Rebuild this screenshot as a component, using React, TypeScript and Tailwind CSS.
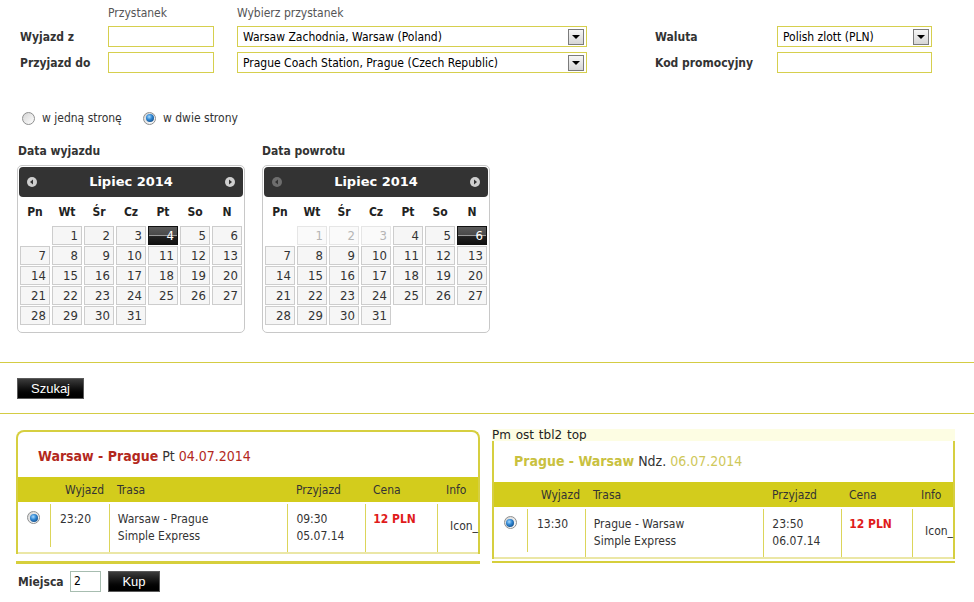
import React from "react";

// Shared font stack — Tahoma-like narrow humanist sans.
const FONT = "[font-family:'DejaVu_Sans_Condensed','DejaVu_Sans',sans-serif]";

// ============================================================
// Small form pieces
// ============================================================
function TextBox({ width, value }: { width: string; value?: string }) {
  return (
    <div className={`${width} h-[21px] border border-[#d6cf4e] bg-white pl-[5px] leading-[19px] text-black`}>
      {value}
    </div>
  );
}

function Select({ width, value }: { width: string; value: string }) {
  return (
    <div className={`${width} h-[21px] border border-[#d6cf4e] bg-white flex items-center pl-[5px] pr-[2px]`}>
      <span className="flex-1 text-black whitespace-nowrap overflow-hidden">{value}</span>
      <span className="w-[16px] h-[16px] border border-[#7b7b7b] bg-gradient-to-b from-[#f6f6f6] to-[#d6d6d6] flex items-center justify-center">
        <span className="block w-0 h-0 border-l-[4px] border-r-[4px] border-t-[4px] border-l-transparent border-r-transparent border-t-black mt-[1px]" />
      </span>
    </div>
  );
}

function Radio({ checked }: { checked?: boolean }) {
  return (
    <span className="w-[13px] h-[13px] rounded-full border border-[#8e8f8f] bg-gradient-to-br from-[#d5d5d5] to-[#ffffff] flex items-center justify-center shrink-0">
      {checked && (
        <span className="block w-[8px] h-[8px] rounded-full bg-[radial-gradient(circle_at_40%_35%,#a9dbff_0%,#2f86d2_40%,#0a3668_100%)]" />
      )}
    </span>
  );
}

function BlackButton({ width, label }: { width: string; label: string }) {
  return (
    <div
      className={`${width} h-[21px] border border-[#5a5a5a] bg-gradient-to-b from-[#3c3c3c] via-[#111] to-[#000] text-white text-[13px] [font-family:'Liberation_Sans',Arial,sans-serif] flex items-center justify-center`}
    >
      {label}
    </div>
  );
}

// ============================================================
// Datepicker (jQuery UI look)
// ============================================================
function NavIcon({ dir, dim }: { dir: "prev" | "next"; dim?: boolean }) {
  return (
    <svg width="10" height="10" viewBox="0 0 10 10">
      <circle cx="5" cy="5" r="5" fill={dim ? "#6e6e6e" : "#cfcfcf"} />
      {dir === "prev" ? (
        <polygon points="6,2.5 6,7.5 3,5" fill="#333" />
      ) : (
        <polygon points="4,2.5 4,7.5 7,5" fill="#333" />
      )}
    </svg>
  );
}

const DAY_NAMES = ["Pn", "Wt", "Śr", "Cz", "Pt", "So", "N"];

function Calendar({ selected, minDay }: { selected: number; minDay: number }) {
  // July 2014 starts on Tuesday, week starts Monday
  const cells: (number | null)[] = [null, ...Array.from({ length: 31 }, (_, i) => i + 1)];

  return (
    <div className="w-[228px] h-[168px] border border-[#c8c8c8] rounded-[5px] p-[1px] bg-white">
      <div className="h-[30px] rounded-[4px] bg-[#333] flex items-center justify-between px-[8px]">
        <NavIcon dir="prev" dim={minDay > 1} />
        <span className="text-white font-bold text-[13px] [font-family:'DejaVu_Sans',sans-serif]">Lipiec 2014</span>
        <NavIcon dir="next" />
      </div>

      <div className="grid grid-cols-7 gap-x-[2px] px-[1px] h-[29px] items-center text-center font-bold text-[12px] text-[#222]">
        {DAY_NAMES.map((d) => (
          <span key={d}>{d}</span>
        ))}
      </div>

      <div className="grid grid-cols-7 gap-x-[2px] gap-y-[1px] px-[1px]">
        {cells.map((day, i) => {
          if (day === null) return <span key={i} />;
          const disabled = day < minDay;
          const isSel = day === selected;
          return (
            <span
              key={i}
              className={`h-[19px] border text-right pr-[3px] text-[13px] leading-[17px] ${
                isSel
                  ? "border-[#111] bg-[linear-gradient(to_bottom,#5c5c5c_0%,#4a4a4a_45%,#9a9a9a_50%,#222_56%,#111_100%)] text-white"
                  : disabled
                  ? "border-[#e6e6e6] bg-[#fafafa] text-[#b5b5b5]"
                  : "border-[#cdcdcd] bg-[#f6f6f6] text-[#333]"
              }`}
            >
              {day}
            </span>
          );
        })}
      </div>
    </div>
  );
}

// ============================================================
// Result tables
// ============================================================
interface Trip {
  dep: string;
  route: string;
  arr: string;
  arrDate: string;
}

function TripTable({ trip, cols }: { trip: Trip; cols: string[] }) {
  return (
    <>
      <div className="h-[25px] bg-[#d3cc1c] flex items-center text-[12px] text-[#333]">
        <span className={cols[0]} />
        <span className={`${cols[1]} text-right pr-[5px]`}>Wyjazd</span>
        <span className={`${cols[2]} pl-[8px]`}>Trasa</span>
        <span className={`${cols[3]} pl-[8px]`}>Przyjazd</span>
        <span className={`${cols[4]} pl-[7px]`}>Cena</span>
        <span className="flex-1 pl-[8px]">Info</span>
      </div>
      <div className="h-[50px] flex text-[12px] text-[#333] leading-[17px] bg-white">
        <div className={`${cols[0]} flex justify-center pt-[9px]`}>
          <Radio checked />
        </div>
        <div className={`${cols[1]} mt-[2px] mb-[5px] border-l border-[#dcd55a] pl-[9px] pt-[7px]`}>{trip.dep}</div>
        <div className={`${cols[2]} mt-[2px] border-l border-[#dcd55a] pl-[8px] pt-[7px]`}>
          <div>{trip.route}</div>
          <div>Simple Express</div>
        </div>
        <div className={`${cols[3]} mt-[2px] border-l border-[#dcd55a] pl-[8px] pt-[7px]`}>
          <div>{trip.arr}</div>
          <div>{trip.arrDate}</div>
        </div>
        <div className={`${cols[4]} mt-[2px] border-l border-[#dcd55a] pl-[7px] pt-[7px] font-bold text-[#e01b1b]`}>12 PLN</div>
        <div className="flex-1 mt-[2px] border-l border-[#dcd55a] pl-[12px] pt-[14px] whitespace-nowrap">Icon_</div>
      </div>
    </>
  );
}

const LEFT_COLS = ["w-[32px]", "w-[59px]", "w-[179px]", "w-[78px]", "w-[72px]"];
const RIGHT_COLS = ["w-[33px]", "w-[58px]", "w-[179px]", "w-[78px]", "w-[71px]"];

// ============================================================
// Page
// ============================================================
export default function App() {
  return (
    <div className={`relative w-[974px] h-[602px] overflow-hidden bg-white text-[12px] text-[#333] ${FONT}`}>
      {/* Search form */}
      <div className="pl-[20px] pt-[4px]">
        <div className="flex h-[16px] text-[#555]">
          <span className="w-[88px]" />
          <span className="w-[129px]">Przystanek</span>
          <span>Wybierz przystanek</span>
        </div>

        <div className="flex items-center h-[21px] mt-[6px]">
          <span className="w-[88px] font-bold">Wyjazd z</span>
          <TextBox width="w-[106px]" />
          <div className="ml-[23px]">
            <Select width="w-[350px]" value="Warsaw Zachodnia, Warsaw (Poland)" />
          </div>
          <span className="ml-[68px] w-[122px] font-bold">Waluta</span>
          <Select width="w-[155px]" value="Polish zlott (PLN)" />
        </div>

        <div className="flex items-center h-[21px] mt-[5px]">
          <span className="w-[88px] font-bold">Przyjazd do</span>
          <TextBox width="w-[106px]" />
          <div className="ml-[23px]">
            <Select width="w-[350px]" value="Prague Coach Station, Prague (Czech Republic)" />
          </div>
          <span className="ml-[68px] w-[122px] font-bold">Kod promocyjny</span>
          <TextBox width="w-[155px]" />
        </div>

        <div className="flex items-center h-[14px] mt-[38px] text-[#333]">
          <span className="ml-[2px]">
            <Radio />
          </span>
          <span className="ml-[7px] w-[101px]">w jedną stronę</span>
          <Radio checked />
          <span className="ml-[7px]">w dwie strony</span>
        </div>
      </div>

      {/* Date pickers */}
      <div className="flex pl-[17px] mt-[19px]">
        <div>
          <div className="h-[14px] leading-[14px] font-bold ml-[1px]">Data wyjazdu</div>
          <div className="mt-[7px]">
            <Calendar selected={4} minDay={1} />
          </div>
        </div>
        <div className="ml-[17px]">
          <div className="h-[14px] leading-[14px] font-bold">Data powrotu</div>
          <div className="mt-[7px]">
            <Calendar selected={6} minDay={4} />
          </div>
        </div>
      </div>

      <div className="h-px bg-[#d4cc44] mt-[29px]" />
      <div className="pl-[17px] mt-[15px]">
        <BlackButton width="w-[67px]" label="Szukaj" />
      </div>
      <div className="h-px bg-[#d4cc44] mt-[14px]" />

      {/* Results */}
      <div className="flex mt-[15px]">
        {/* Outbound */}
        <div className="ml-[16px] w-[464px] mt-[1px]">
          <div className="border-2 border-b-0 border-[#d6cf40] rounded-t-[8px]">
            <div className="h-[45px] pl-[20px] pt-[16px] leading-[17px] text-[14px] whitespace-nowrap">
              <span className="font-bold text-[#b3281d]">Warsaw - Prague</span>
              <span className="text-[#333]"> Pt </span>
              <span className="text-[#b3281d]">04.07.2014</span>
            </div>
            <TripTable
              cols={LEFT_COLS}
              trip={{ dep: "23:20", route: "Warsaw - Prague", arr: "09:30", arrDate: "05.07.14" }}
            />
            <div className="h-[2px] bg-[#ebe7a6]" />
          </div>
          <div className="h-[3px] bg-[#d6cf3c] mt-[7px]" />
          <div className="flex items-center h-[21px] mt-[7px] pl-[2px]">
            <span className="w-[52px] font-bold">Miejsca</span>
            <div className="w-[31px] h-[21px] border border-[#a7bdb0] pl-[3px] leading-[19px] text-black">2</div>
            <div className="ml-[7px]">
              <BlackButton width="w-[52px]" label="Kup" />
            </div>
          </div>
        </div>

        {/* Return */}
        <div className="ml-[12px] w-[463px]">
          <div className="h-[12px] bg-[#fdfde3] leading-[13px] text-[#222] overflow-hidden [font-family:'DejaVu_Sans',sans-serif] [word-spacing:1px]">
            Pm ost tbl2 top
          </div>
          <div className="border-x-2 border-[#d6cf40]">
            <div className="h-[41px] pl-[20px] pt-[12px] leading-[17px] text-[14px] whitespace-nowrap">
              <span className="font-bold text-[#c9c13f]">Prague - Warsaw</span>
              <span className="text-[#333]"> Ndz. </span>
              <span className="text-[#cfc85a]">06.07.2014</span>
            </div>
            <TripTable
              cols={RIGHT_COLS}
              trip={{ dep: "13:30", route: "Prague - Warsaw", arr: "23:50", arrDate: "06.07.14" }}
            />
            <div className="h-[2px] bg-[#ebe7a6]" />
          </div>
          <div className="h-[2px] bg-[#d6cf3c] mt-[2px]" />
        </div>
      </div>
    </div>
  );
}
